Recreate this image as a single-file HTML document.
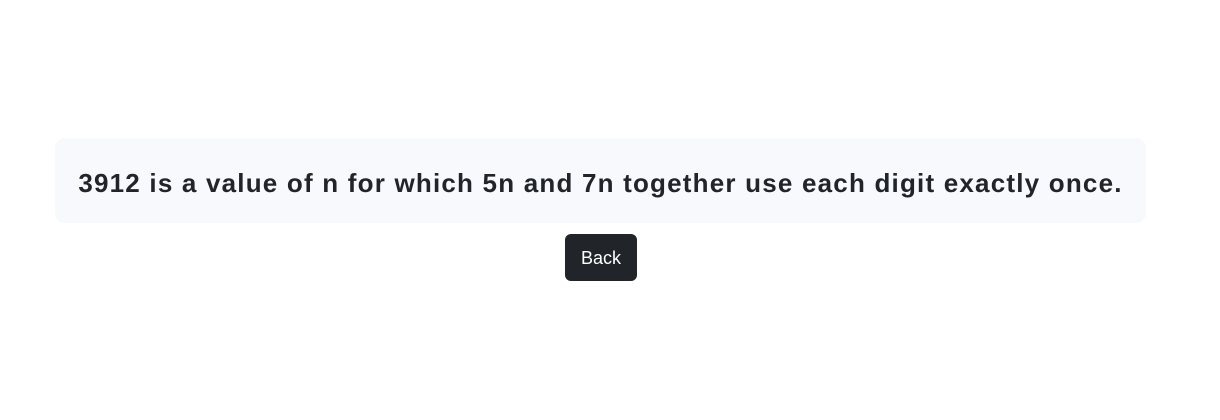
<!DOCTYPE html>
<html><head><style>
html,body{margin:0;background:#fff;width:1220px;height:420px;overflow:hidden;font-family:"Liberation Sans",sans-serif;}
.box{position:absolute;left:55px;top:138px;width:1091px;height:85px;background:#f8f9fd;border-radius:10px;}
.box p{margin:0;position:absolute;left:0;right:0;top:30px;text-align:center;font-size:26px;letter-spacing:1.2px;font-weight:bold;color:#212529;line-height:30px;white-space:nowrap;}
.btn{position:absolute;left:565px;top:234px;width:72px;height:47px;background:#212529;border-radius:6px;color:#fff;font-size:18px;line-height:49px;text-align:center;}
</style></head><body>
<div class="box"><p>3912 is a value of n for which 5n and 7n together use each digit exactly once.</p></div>
<div class="btn">Back</div>
</body></html>
